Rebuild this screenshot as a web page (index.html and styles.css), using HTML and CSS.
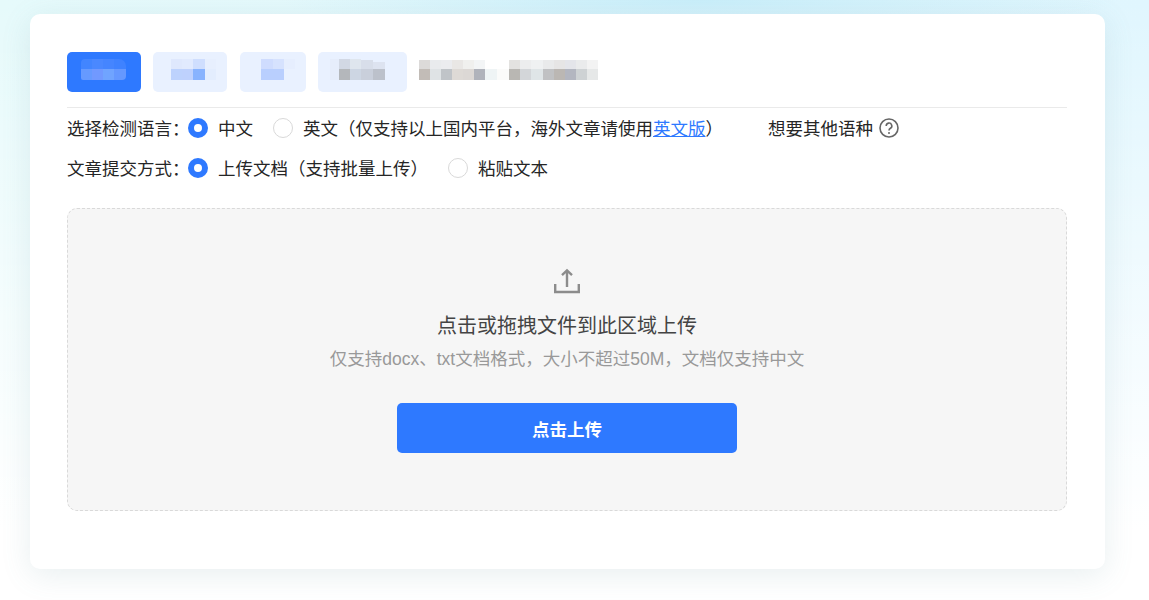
FILE: index.html
```html
<!DOCTYPE html>
<html lang="zh-CN">

<head>
    <meta charset="UTF-8" />
    <title>文章检测</title>
    <link rel="stylesheet" href="styles.css">
</head>

<body>
    <div class="card">
        <div class="tabs">
            <div class="tab tab-active tab-one">
                <svg class="mosaic" width="45" height="21" viewBox="0 0 45 21">
                    <path d="M0 10V4a4 4 0 0 1 4-4H11V10Z" fill="#4285ff" />
                    <rect x="11" y="0" width="11" height="10" fill="#4a88ff" />
                    <rect x="22" y="0" width="11" height="10" fill="#4585ff" />
                    <path d="M33 0h5a7 7 0 0 1 7 7v3H33Z" fill="#3f82ff" />
                    <path d="M0 10H11V21H2a2 2 0 0 1-2-2Z" fill="#669aff" />
                    <rect x="11" y="10" width="11" height="11" fill="#7199ff" />
                    <rect x="22" y="10" width="11" height="11" fill="#70a4ff" />
                    <path d="M33 10H45V17a4 4 0 0 1-4 4H33Z" fill="#6598ff" />
                </svg>
            </div>
            <div class="tab tab-two">
                <svg class="mosaic" width="45" height="21" viewBox="0 0 45 21">
                    <rect x="0" y="0" width="11" height="10" fill="#dfe8fd" />
                    <rect x="11" y="0" width="11" height="10" fill="#e1eafe" />
                    <rect x="22" y="0" width="12" height="10" fill="#cfdefe" />
                    <rect x="34" y="0" width="11" height="10" fill="#e7effe" />
                    <rect x="0" y="10" width="11" height="11" fill="#bdd2fd" />
                    <rect x="11" y="10" width="11" height="11" fill="#bed1fd" />
                    <rect x="22" y="10" width="12" height="11" fill="#88b3fe" />
                    <rect x="34" y="10" width="11" height="11" fill="#e3edfe" />
                </svg>
            </div>
            <div class="tab tab-three">
                <svg class="mosaic" width="34" height="21" viewBox="0 0 34 21">
                    <rect x="0" y="0" width="12" height="10" fill="#cfdcfe" />
                    <rect x="12" y="0" width="11" height="10" fill="#d6e2fe" />
                    <rect x="23" y="0" width="11" height="10" fill="#e6eefe" />
                    <rect x="0" y="10" width="23" height="11" fill="#b9cffe" />
                </svg>
            </div>
            <div class="tab tab-four">
                <svg class="mosaic" width="55" height="21" viewBox="0 0 55 21">
                    <rect x="0" y="0" width="9" height="21" fill="#e6edfb" />
                    <rect x="9" y="0" width="11" height="10" fill="#d2d8e4" />
                    <rect x="20" y="0" width="11" height="10" fill="#dfe6ee" />
                    <rect x="31" y="1" width="12" height="9" fill="#d8deea" />
                    <rect x="43" y="3" width="12" height="7" fill="#dde3f0" />
                    <rect x="9" y="10" width="11" height="11" fill="#b4b7bb" />
                    <rect x="20" y="10" width="11" height="11" fill="#cdd6e3" />
                    <rect x="31" y="10" width="12" height="11" fill="#c9cfdb" />
                    <rect x="43" y="10" width="12" height="11" fill="#bcc1cb" />
                </svg>
            </div>
            <svg class="mosaic tab-note" width="179" height="20" viewBox="0 0 179 20">
                <rect x="0" y="0" width="11" height="9" fill="#dcdad9" />
                <rect x="11" y="0" width="11" height="9" fill="#e9ebed" />
                <rect x="22" y="0" width="11" height="9" fill="#ebecef" />
                <rect x="33" y="0" width="11" height="9" fill="#e9e7e5" />
                <rect x="44" y="0" width="11" height="9" fill="#f0f0ee" />
                <rect x="55" y="0" width="11" height="9" fill="#f3f5f6" />
                <rect x="90" y="0" width="11" height="9" fill="#e3e2e0" />
                <rect x="101" y="0" width="11" height="9" fill="#ecedee" />
                <rect x="112" y="0" width="12" height="9" fill="#eff1f2" />
                <rect x="124" y="0" width="11" height="9" fill="#e9eaeb" />
                <rect x="135" y="0" width="11" height="9" fill="#e6e5e5" />
                <rect x="146" y="0" width="11" height="9" fill="#e4e5ea" />
                <rect x="157" y="0" width="11" height="9" fill="#eaebec" />
                <rect x="168" y="0" width="11" height="9" fill="#f3f3f3" />
                <rect x="0" y="9" width="11" height="11" fill="#c2bcb7" />
                <rect x="11" y="9" width="11" height="11" fill="#dfe3e5" />
                <rect x="22" y="9" width="11" height="11" fill="#c0c4c8" />
                <rect x="33" y="9" width="11" height="11" fill="#dedad6" />
                <rect x="44" y="9" width="11" height="11" fill="#dcd8d5" />
                <rect x="55" y="9" width="11" height="11" fill="#b0b3bb" />
                <rect x="66" y="9" width="12" height="11" fill="#eff4f5" />
                <rect x="78" y="9" width="12" height="11" fill="#fbfbfa" />
                <rect x="90" y="9" width="11" height="11" fill="#b9b7b3" />
                <rect x="101" y="9" width="11" height="11" fill="#d3d6d9" />
                <rect x="112" y="9" width="12" height="11" fill="#dfe5e7" />
                <rect x="124" y="9" width="11" height="11" fill="#c0c1c3" />
                <rect x="135" y="9" width="11" height="11" fill="#bbb7b3" />
                <rect x="146" y="9" width="11" height="11" fill="#b3b6c0" />
                <rect x="157" y="9" width="11" height="11" fill="#ced2d4" />
                <rect x="168" y="9" width="11" height="11" fill="#e6e8e8" />
            </svg>
        </div>

        <div class="form-row">
            <span class="form-label">选择检测语言：</span>
            <span class="radio radio-checked"></span>
            <span class="radio-text radio-text-gap">中文</span>
            <span class="radio"></span>
            <span class="radio-text">英文（仅支持以上国内平台，海外文章请使用<a class="link" href="#">英文版</a>）</span>
            <span class="more-lang">想要其他语种</span>
            <svg class="help-icon" width="20" height="20" viewBox="0 0 20 20">
                <circle cx="10" cy="10" r="9" fill="none" stroke="#666" stroke-width="1.6" />
                <path d="M7.2 7.9a2.8 2.8 0 1 1 4.2 2.4c-.9.5-1.4 1-1.4 2.2" fill="none" stroke="#666" stroke-width="1.6" />
                <circle cx="10" cy="15" r="1" fill="#666" />
            </svg>
        </div>

        <div class="form-row">
            <span class="form-label">文章提交方式：</span>
            <span class="radio radio-checked"></span>
            <span class="radio-text radio-text-gap">上传文档（支持批量上传）</span>
            <span class="radio"></span>
            <span class="radio-text">粘贴文本</span>
        </div>

        <div class="upload-area">
            <svg class="upload-icon" width="26" height="26" viewBox="0 0 26 26">
                <path d="M1.2 16v8h23.6v-8" fill="none" stroke="#8c8c8c" stroke-width="2.4" />
                <path d="M13 19V2.5M8 7.2L13 2.5l5 4.7" fill="none" stroke="#8c8c8c" stroke-width="2.4" />
            </svg>
            <p class="upload-title">点击或拖拽文件到此区域上传</p>
            <p class="upload-hint">仅支持docx、txt文档格式，大小不超过50M，文档仅支持中文</p>
            <button class="upload-btn">点击上传</button>
        </div>
    </div>
</body>

</html>
```

FILE: styles.css
```css
* {
    box-sizing: border-box;
}

body {
    margin: 0;
    height: 600px;
    overflow: hidden;
    padding: 14px 44px 0 30px;
    font-family: "Liberation Sans", "Noto Sans CJK SC", sans-serif;
    color: #262626;
    background:
        radial-gradient(ellipse 420px 34px at 700px 0, #c9eefa, rgba(201, 238, 250, 0)),
        linear-gradient(180deg, rgba(255, 255, 255, 0) 0, #fff 530px),
        linear-gradient(90deg, #e6fafb, #e0f6fe);
}

.card {
    width: 1075px;
    height: 555px;
    padding: 38px 38px 0 37px;
    background: #fff;
    border-radius: 10px;
    box-shadow: 0 6px 30px rgba(90, 140, 150, 0.14);
}

.tabs {
    display: flex;
    align-items: flex-start;
    height: 56px;
    border-bottom: 1px solid #eaeaea;
}

.tab {
    display: flex;
    align-items: flex-start;
    height: 40px;
    margin-right: 12.3px;
    padding-top: 7px;
    background: #e9f1ff;
    border-radius: 5px;
}

.tab-active {
    background: #2e79ff;
}

.tab-one {
    width: 74px;
    padding-left: 14px;
}

.tab-two {
    width: 74px;
    padding-left: 18px;
}

.tab-three {
    width: 66px;
    padding-left: 21px;
}

.tab-four {
    width: 89px;
    padding-left: 12px;
}

.mosaic {
    display: block;
    flex-shrink: 0;
}

.tab-note {
    margin-top: 8px;
}

.form-row {
    display: flex;
    align-items: center;
    height: 20px;
    margin-top: 10px;
    font-size: 17.5px;
    line-height: 22px;
}

.form-row + .form-row {
    margin-top: 20px;
}

.form-label {
    width: 121px;
    flex-shrink: 0;
    padding-top: 2px;
    white-space: nowrap;
}

.radio {
    width: 20px;
    height: 20px;
    margin-right: 10px;
    flex-shrink: 0;
    border: 1px solid #d9d9d9;
    border-radius: 50%;
    background: #fff;
}

.radio-checked {
    border: 6px solid #2e79ff;
}

.radio-text {
    padding-top: 2px;
    white-space: nowrap;
}

.radio-text-gap {
    margin-right: 20px;
}

.link {
    color: #2e79ff;
}

.more-lang {
    margin-left: 45px;
    padding-top: 2px;
    white-space: nowrap;
}

.help-icon {
    margin-left: 6px;
}

.upload-area {
    display: flex;
    flex-direction: column;
    align-items: center;
    height: 303px;
    margin-top: 30px;
    padding-top: 59px;
    background: #f6f6f6;
    border: 1px dashed #d9d9d9;
    border-radius: 10px;
}

.upload-icon {
    display: block;
    flex-shrink: 0;
}

.upload-title {
    margin: 18px 0 0;
    font-size: 20px;
    line-height: 28px;
    color: #444;
}

.upload-hint {
    margin: 7px 0 0;
    font-size: 17.5px;
    line-height: 24px;
    color: #999;
}

.upload-btn {
    width: 340px;
    height: 50px;
    margin-top: 32px;
    border: none;
    border-radius: 5px;
    background: #2e79ff;
    color: #fff;
    font-family: inherit;
    font-size: 17.5px;
    font-weight: bold;
}
```
